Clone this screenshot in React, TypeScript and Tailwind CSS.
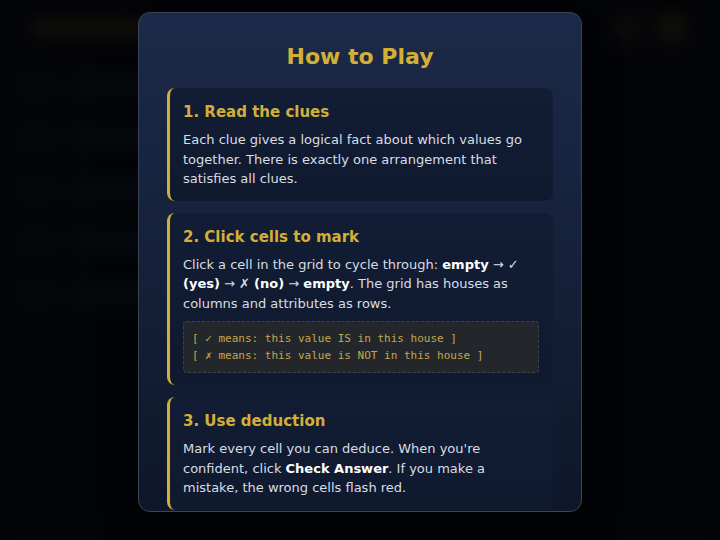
import type { ReactNode } from "react";

const font = { fontFamily: '"DejaVu Sans", "Noto Sans", sans-serif' };

function Step({ title, children }: { title: string; children: ReactNode }) {
  return (
    <section className="rounded-lg border-l-[3px] border-[#d4af37] bg-gradient-to-b from-[#121d35] to-[#0f1a2f] pt-[14px] pb-3 pl-[13px] pr-[14px]">
      <h3 className="text-[15px] leading-5 font-bold text-[#d4af37]">{title}</h3>
      <div className="mt-2 text-[13px] leading-[19.5px] text-[#d9dde4]">{children}</div>
    </section>
  );
}

function Backdrop() {
  // faint page behind the overlay
  return (
    <div className="absolute inset-0 bg-[#05070c] blur-[8px]">
      <div className="flex items-center justify-between px-8 pt-3">
        <div className="h-4 w-32 rounded bg-[#1a170e]" />
        <div className="flex gap-3">
          <div className="h-8 w-8 rounded-full bg-[#100f0c]" />
          <div className="h-8 w-8 rounded-full bg-[#17140d]" />
        </div>
      </div>
      <div className="mt-8 flex flex-col gap-8 px-5">
        {[0, 1, 2, 3, 4].map((i) => (
          <div key={i} className="flex items-center gap-6">
            <div className="h-5 w-8 rounded bg-[#090b11]" />
            <div className="h-5 w-24 rounded bg-[#0b0e15]" />
          </div>
        ))}
      </div>
    </div>
  );
}

export default function App() {
  return (
    <div className="relative h-[540px] w-[720px] overflow-hidden bg-[#04060a]" style={font}>
      <Backdrop />
      <div className="absolute inset-0 bg-black/30" />
      <div className="relative flex justify-center pt-3">
        <div className="h-[500px] w-[444px] overflow-hidden rounded-xl border border-[#3b4456] bg-gradient-to-b from-[#1b2a48] via-[#15213a] to-[#0e1729] px-7 pt-7 shadow-2xl">
          <h2 className="text-center text-[22px] leading-8 font-bold text-[#d4af37]">How to Play</h2>
          <div className="mt-[15px] flex flex-col gap-3">
            <Step title="1. Read the clues">
              Each clue gives a logical fact about which values go together. There is exactly one
              arrangement that satisfies all clues.
            </Step>
            <Step title="2. Click cells to mark">
              <p>
                Click a cell in the grid to cycle through: <b className="text-white">empty</b> → ✓{" "}
                <b className="text-white">(yes)</b> → ✗ <b className="text-white">(no)</b> →{" "}
                <b className="text-white">empty</b>. The grid has houses as columns and attributes as
                rows.
              </p>
              <div
                className="mt-[8px] rounded border border-dashed border-[#3d4248] bg-[#23272c] px-2 py-2 text-[11px] leading-[17px] text-[#c4a747]"
                style={{ fontFamily: '"DejaVu Sans Mono", "Liberation Mono", monospace' }}
              >
                <div>[ ✓ means: this value IS in this house ]</div>
                <div>[ ✗ means: this value is NOT in this house ]</div>
              </div>
            </Step>
            <Step title="3. Use deduction">
              Mark every cell you can deduce. When you're confident, click{" "}
              <b className="text-white">Check Answer</b>. If you make a mistake, the wrong cells flash
              red.
            </Step>
          </div>
        </div>
      </div>
    </div>
  );
}
